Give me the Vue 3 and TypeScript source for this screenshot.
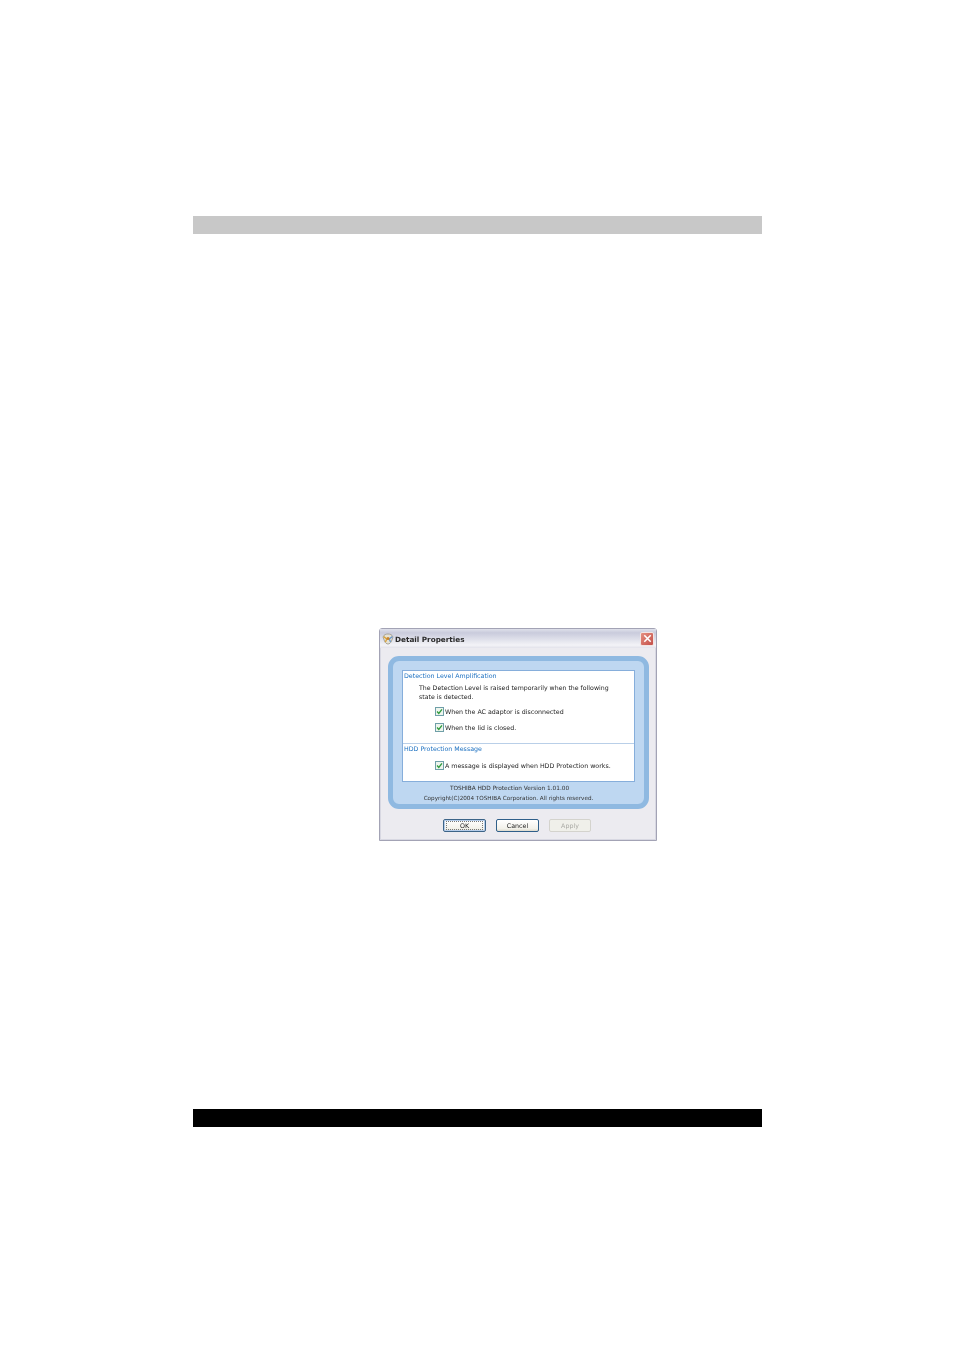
<script setup lang="ts">
interface Section {
  title: string
  intro?: string[]
  options: string[]
}
const sections: Section[] = [
  {
    title: 'Detection Level Amplification',
    intro: [
      'The Detection Level is raised temporarily when the following',
      'state is detected.',
    ],
    options: ['When the AC adaptor is disconnected', 'When the lid is closed.'],
  },
  {
    title: 'HDD Protection Message',
    options: ['A message is displayed when HDD Protection works.'],
  },
]
</script>

<template>
  <div class="page">
    <div class="bar bar-top"></div>
    <div class="dialog-row">
      <div class="dialog">
        <div class="titlebar">
          <svg class="app-icon" viewBox="0 0 12 12" width="12" height="12">
            <path d="M1 4 C2 1.5 4 1 6 1 C8 1 10 1.5 11 4 L9.5 8 C8.8 10 7.2 11 6 11 C4.8 11 3.2 10 2.5 8 Z" fill="#e6e2d4" stroke="#8f8a78" stroke-width="0.7" />
            <path d="M1.6 3.6 L4.8 6 L3.4 9" fill="none" stroke="#d9a33a" stroke-width="1.4" />
            <path d="M10.4 3.6 L7.2 6 L8.6 9" fill="none" stroke="#6c98cc" stroke-width="1.4" />
            <circle cx="6" cy="5.6" r="1.5" fill="#c9842c" />
          </svg>
          <span class="title">Detail Properties</span>
          <span class="close">
            <svg viewBox="0 0 12 12" width="12" height="12">
              <path d="M2.5 2.5 L9.5 9.5 M9.5 2.5 L2.5 9.5" stroke="#fff" stroke-width="1.7" fill="none" />
            </svg>
          </span>
        </div>
        <div class="body">
          <div class="frame">
            <div class="panel">
              <section v-for="s in sections" :key="s.title" class="section">
                <div class="heading">{{ s.title }}</div>
                <p v-if="s.intro" class="intro">
                  <span v-for="l in s.intro" :key="l" class="intro-line">{{ l }}</span>
                </p>
                <div v-for="o in s.options" :key="o" class="option">
                  <span class="check">
                    <svg viewBox="0 0 8 8" width="8" height="8">
                      <path d="M1.2 4 L3.2 6.2 L6.8 1.6" fill="none" stroke="#2f9a3c" stroke-width="1.5" />
                    </svg>
                  </span>
                  <span>{{ o }}</span>
                </div>
              </section>
            </div>
            <div class="footer">
              <div class="version">TOSHIBA HDD Protection Version 1.01.00</div>
              <div class="copyright">Copyright(C)2004 TOSHIBA Corporation. All rights reserved.</div>
            </div>
          </div>
          <div class="buttons">
            <button class="btn default"><span class="focus">OK</span></button>
            <button class="btn">Cancel</button>
            <button class="btn disabled">Apply</button>
          </div>
        </div>
      </div>
    </div>
    <div class="bar bar-bottom"></div>
  </div>
</template>

<style>
html, body { margin: 0; background: #fff; }
</style>

<style scoped>
.page {
  width: 569px;
  height: 1350px;
  box-sizing: border-box;
  margin-left: 193px;
  padding-top: 216px;
  font-family: "DejaVu Sans", sans-serif;
  color: #222;
}
.bar { height: 18px; }
.bar-top { background: #c8c8c8; }
.bar-bottom { background: #000; margin-top: 268px; }
.dialog-row { padding: 394px 0 0 186px; }
.dialog {
  width: 278px;
  height: 213px;
  box-sizing: border-box;
  border: 1px solid #a3a3b5;
  border-radius: 3px 3px 0 0;
  background: #ecebf0;
  display: flex;
  flex-direction: column;
  box-shadow: inset 0 0 0 1px #d8d8e2;
  filter: blur(0.3px);
}
.titlebar {
  height: 19px;
  flex: none;
  display: flex;
  align-items: center;
  padding: 0 2px 0 2px;
  background: linear-gradient(#dfe0ea 0%, #c9cbdc 20%, #f3f3f7 85%, #e2e2ea 100%);
}
.app-icon { flex: none; }
.title {
  margin-left: 1px;
  padding-top: 1px;
  font-size: 7.25px;
  font-weight: 700;
  color: #2a2a2a;
  flex: 1;
}
.close {
  width: 14px;
  height: 14px;
  box-sizing: border-box;
  border: 1px solid #f2e4e2;
  border-radius: 2px;
  background: linear-gradient(135deg, #e58f80, #c4504a);
  display: flex;
  align-items: center;
  justify-content: center;
}
.close svg { width: 11px; height: 11px; }
.body {
  flex: 1;
  padding: 8px 7px 0 8px;
  display: flex;
  flex-direction: column;
}
.frame {
  height: 153px;
  box-sizing: border-box;
  border: 5px solid #8fb9e1;
  border-radius: 11px;
  background: #bed7f1;
  padding: 9px 9px 0 9px;
}
.panel {
  height: 112px;
  box-sizing: border-box;
  background: #fff;
  border: 1px solid #86aedb;
  font-size: 6.3px;
}
.section + .section {
  border-top: 1px solid #b9cfe8;
}
.section:first-child { height: 72px; }
.heading {
  height: 10px;
  line-height: 10px;
  padding-left: 1px;
  font-size: 6.3px;
  color: #1a6fc0;
}
.intro {
  margin: 3px 0 2px 16px;
  font-size: 6.24px;
}
.intro-line {
  display: block;
  line-height: 8.5px;
  height: 8.5px;
  white-space: nowrap;
}
.option {
  height: 16px;
  display: flex;
  align-items: center;
  padding-left: 32px;
  white-space: nowrap;
}
.section + .section .option { margin-top: 3px; }
.check {
  width: 9px;
  height: 9px;
  box-sizing: border-box;
  border: 1px solid #6f9fa8;
  background: #eef5ee;
  margin-right: 1px;
  display: flex;
  flex: none;
  align-items: center;
  justify-content: center;
}
.check svg { width: 7px; height: 7px; }
.footer {
  text-align: center;
  color: #333;
}
.version { height: 10px; line-height: 13px; padding-right: 18px; font-size: 5.8px; }
.copyright { height: 10px; line-height: 13px; padding-right: 20px; font-size: 5.66px; }
.buttons {
  margin-top: 10px;
  display: flex;
  padding-left: 55px;
  gap: 10px;
}
.btn {
  width: 43px;
  height: 13px;
  box-sizing: border-box;
  padding: 0;
  font: inherit;
  font-size: 6.3px;
  color: #222;
  border: 1px solid #2f5f8a;
  border-radius: 2px;
  background: linear-gradient(#ffffff, #f2f1ea 80%, #dcd9cc);
  display: flex;
  align-items: center;
  justify-content: center;
}
.btn.default { border-color: #3d6488; box-shadow: inset 0 0 0 1px #b6cdea; }
.focus {
  box-sizing: border-box;
  width: 37px;
  height: 9px;
  line-height: 8px;
  border: 1px dotted #777;
  text-align: center;
}
.btn.disabled {
  width: 42px;
  color: #a9a9a4;
  border-color: #d4d3cd;
  background: #f0f0ea;
}
</style>
